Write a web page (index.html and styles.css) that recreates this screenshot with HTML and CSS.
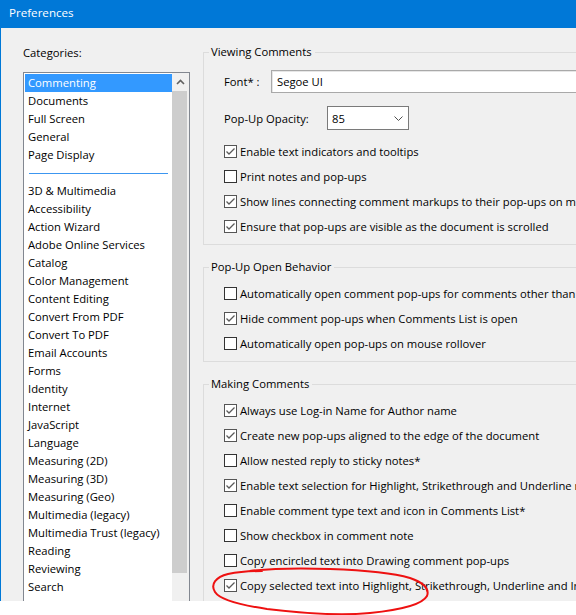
FILE: index.html
```html
<!DOCTYPE html>
<html>
<head>
<meta charset="utf-8">
<title>Preferences</title>
<link rel="stylesheet" href="styles.css">
</head>
<body>
<div class="window">
  <div class="titlebar">Preferences</div>
  <div class="main">
    <div class="cats">
      <div class="cats-label">Categories:</div>
      <div class="listbox">
        <ul class="items">
          <li class="sel">Commenting</li>
          <li>Documents</li>
          <li>Full Screen</li>
          <li>General</li>
          <li>Page Display</li>
          <li class="sep"></li>
          <li>3D &amp; Multimedia</li>
          <li>Accessibility</li>
          <li>Action Wizard</li>
          <li>Adobe Online Services</li>
          <li>Catalog</li>
          <li>Color Management</li>
          <li>Content Editing</li>
          <li>Convert From PDF</li>
          <li>Convert To PDF</li>
          <li>Email Accounts</li>
          <li>Forms</li>
          <li>Identity</li>
          <li>Internet</li>
          <li>JavaScript</li>
          <li>Language</li>
          <li>Measuring (2D)</li>
          <li>Measuring (3D)</li>
          <li>Measuring (Geo)</li>
          <li>Multimedia (legacy)</li>
          <li>Multimedia Trust (legacy)</li>
          <li>Reading</li>
          <li>Reviewing</li>
          <li>Search</li>
          <li>Security</li>
        </ul>
        <div class="scrollbar">
          <div class="sb-up"><svg width="9" height="6" viewBox="0 0 9 6"><path d="M1 5 L4.5 1.5 L8 5" fill="none" stroke="#606060" stroke-width="1.6"/></svg></div>
          <div class="sb-thumb"></div>
        </div>
      </div>
    </div>
    <div class="panel">
      <fieldset class="group">
        <legend>Viewing Comments</legend>
        <div class="group-body first">
          <div class="form-row">
            <span class="lbl lbl-font">Font* :</span>
            <div class="textbox">Segoe UI</div>
          </div>
          <div class="form-row row2">
            <span class="lbl lbl-op">Pop-Up Opacity:</span>
            <div class="select"><span>85</span><svg width="9" height="5" viewBox="0 0 9 5"><path d="M0.5 0.5 L4.5 4.5 L8.5 0.5" fill="none" stroke="#505050" stroke-width="1"/></svg></div>
          </div>
          <div class="checks">
            <div class="check"><span class="cb on"><svg width="11" height="11" viewBox="0 0 11 11"><path d="M1.5 5.5 L4 8 L9.5 2.5" fill="none" stroke="#5a5a5a" stroke-width="1.3"/></svg></span>Enable text indicators and tooltips</div>
            <div class="check"><span class="cb"></span>Print notes and pop-ups</div>
            <div class="check"><span class="cb on"><svg width="11" height="11" viewBox="0 0 11 11"><path d="M1.5 5.5 L4 8 L9.5 2.5" fill="none" stroke="#5a5a5a" stroke-width="1.3"/></svg></span>Show lines connecting comment markups to their pop-ups on mouse rollover</div>
            <div class="check"><span class="cb on"><svg width="11" height="11" viewBox="0 0 11 11"><path d="M1.5 5.5 L4 8 L9.5 2.5" fill="none" stroke="#5a5a5a" stroke-width="1.3"/></svg></span>Ensure that pop-ups are visible as the document is scrolled</div>
          </div>
        </div>
      </fieldset>
      <fieldset class="group">
        <legend>Pop-Up Open Behavior</legend>
        <div class="group-body">
          <div class="check"><span class="cb"></span>Automatically open comment pop-ups for comments other than the Hand tool</div>
          <div class="check"><span class="cb on"><svg width="11" height="11" viewBox="0 0 11 11"><path d="M1.5 5.5 L4 8 L9.5 2.5" fill="none" stroke="#5a5a5a" stroke-width="1.3"/></svg></span>Hide comment pop-ups when Comments List is open</div>
          <div class="check"><span class="cb"></span>Automatically open pop-ups on mouse rollover</div>
        </div>
      </fieldset>
      <fieldset class="group">
        <legend>Making Comments</legend>
        <div class="group-body">
          <div class="check"><span class="cb on"><svg width="11" height="11" viewBox="0 0 11 11"><path d="M1.5 5.5 L4 8 L9.5 2.5" fill="none" stroke="#5a5a5a" stroke-width="1.3"/></svg></span>Always use Log-in Name for Author name</div>
          <div class="check"><span class="cb on"><svg width="11" height="11" viewBox="0 0 11 11"><path d="M1.5 5.5 L4 8 L9.5 2.5" fill="none" stroke="#5a5a5a" stroke-width="1.3"/></svg></span>Create new pop-ups aligned to the edge of the document</div>
          <div class="check"><span class="cb"></span>Allow nested reply to sticky notes*</div>
          <div class="check"><span class="cb on"><svg width="11" height="11" viewBox="0 0 11 11"><path d="M1.5 5.5 L4 8 L9.5 2.5" fill="none" stroke="#5a5a5a" stroke-width="1.3"/></svg></span>Enable text selection for Highlight, Strikethrough and Underline markup tools</div>
          <div class="check"><span class="cb"></span>Enable comment type text and icon in Comments List*</div>
          <div class="check"><span class="cb"></span>Show checkbox in comment note</div>
          <div class="check"><span class="cb"></span>Copy encircled text into Drawing comment pop-ups</div>
          <div class="check"><span class="cb on"><svg width="11" height="11" viewBox="0 0 11 11"><path d="M1.5 5.5 L4 8 L9.5 2.5" fill="none" stroke="#5a5a5a" stroke-width="1.3"/></svg></span>Copy selected text into Highlight, Strikethrough, Underline and Insert text comment pop-ups</div>
        </div>
      </fieldset>
    </div>
  </div>
</div>
<svg class="annot" width="576" height="615" viewBox="0 0 576 615">
  <path d="M250 571 C 275 568, 300 568, 330 569 C 360 570, 390 572, 410 578 C 422 582, 430 588, 427 596 C 422 605, 400 610, 370 613 C 340 616, 300 613, 267 609 C 240 605, 220 600, 215 592 C 210 584, 216 577, 228 574 C 238 572, 250 571, 262 571" fill="none" stroke="#ee1111" stroke-width="2" stroke-linecap="round"/>
</svg>
</body>
</html>
```

FILE: styles.css
```css
html, body {
  margin: 0;
  padding: 0;
  background: #ffffff;
}

body {
  width: 576px;
  height: 615px;
  overflow: hidden;
  position: relative;
  font-family: "Open Sans", "Noto Sans", sans-serif;
  font-size: 11.25px;
  color: #000;
}

.window {
  width: 575px;
  height: 601px;
  border-left: 1px solid #0078d7;
  background: #f0f0f0;
  overflow: hidden;
  display: flex;
  flex-direction: column;
}

.titlebar {
  flex: none;
  height: 28px;
  line-height: 26px;
  background: #0078d7;
  color: #ffffff;
  padding-left: 8px;
  font-size: 11.6px;
}

.main {
  flex: 1;
  min-height: 0;
  display: flex;
}

/* Left: categories */
.cats {
  flex: none;
  width: 167px;
  padding-left: 22px;
  padding-top: 17px;
  display: flex;
  flex-direction: column;
}

.cats-label {
  line-height: 16px;
  margin-bottom: 11px;
}

.listbox {
  flex: none;
  height: 620px;
  border: 1px solid #828790;
  background: #ffffff;
  display: flex;
}

.items {
  list-style: none;
  margin: 0;
  padding: 1px 0 0 1px;
  width: 147px;
  flex: none;
}

.items li {
  height: 18px;
  line-height: 18px;
  padding-left: 3px;
  white-space: nowrap;
}

.items li.sel {
  background: #3399ff;
  color: #ffffff;
}

.items li.sep {
  height: 9px;
  margin: 0 4px 8px 4px;
  padding: 0;
  border-bottom: 1px solid #3c96f0;
}

.scrollbar {
  flex: none;
  width: 17px;
  background: #f0f0f0;
  display: flex;
  flex-direction: column;
}

.sb-up {
  height: 17px;
  display: flex;
  align-items: center;
  justify-content: center;
}

.sb-thumb {
  height: 482px;
  margin: 1px 2px 0 0;
  background: #cdcdcd;
}

/* Right: options */
.panel {
  flex: none;
  width: 420px;
  padding-left: 13px;
  padding-top: 16px;
}

.group {
  margin: 0 0 14px 0;
  padding: 0;
  border: 1px solid #dcdcdc;
  min-width: 0;
}

.group legend {
  margin-left: 5px;
  padding: 0 3px 0 2px;
  line-height: 16px;
}

.group-body {
  padding: 6px 0 5px 20px;
}

.group-body.first {
  padding-top: 10px;
}

.form-row {
  display: flex;
  align-items: center;
}

.row2 {
  margin-top: 13px;
}

.lbl {
  flex: none;
  white-space: nowrap;
}

.lbl-font {
  width: 47px;
}

.lbl-op {
  width: 103px;
}

.textbox {
  box-sizing: border-box;
  height: 23px;
  width: 320px;
  border: 1px solid #a9a9a9;
  box-shadow: inset 1px 1px 0 #e6e6e6;
  background: #ffffff;
  padding-left: 5px;
  line-height: 21px;
}

.select {
  box-sizing: border-box;
  height: 24px;
  width: 82px;
  border: 1px solid #7a7a7a;
  background: #ffffff;
  display: flex;
  align-items: center;
  justify-content: space-between;
  padding: 0 5px 0 4px;
}

.checks {
  margin-top: 9px;
}

.check {
  height: 25px;
  display: flex;
  align-items: center;
  white-space: nowrap;
}

.cb {
  flex: none;
  box-sizing: border-box;
  width: 13px;
  height: 13px;
  border: 1px solid #333333;
  background: #ffffff;
  margin-right: 3px;
  display: flex;
  align-items: center;
  justify-content: center;
}

.cb.on {
  border-color: #555555;
}

.annot {
  position: absolute;
  left: 0;
  top: 0;
  pointer-events: none;
}
```
